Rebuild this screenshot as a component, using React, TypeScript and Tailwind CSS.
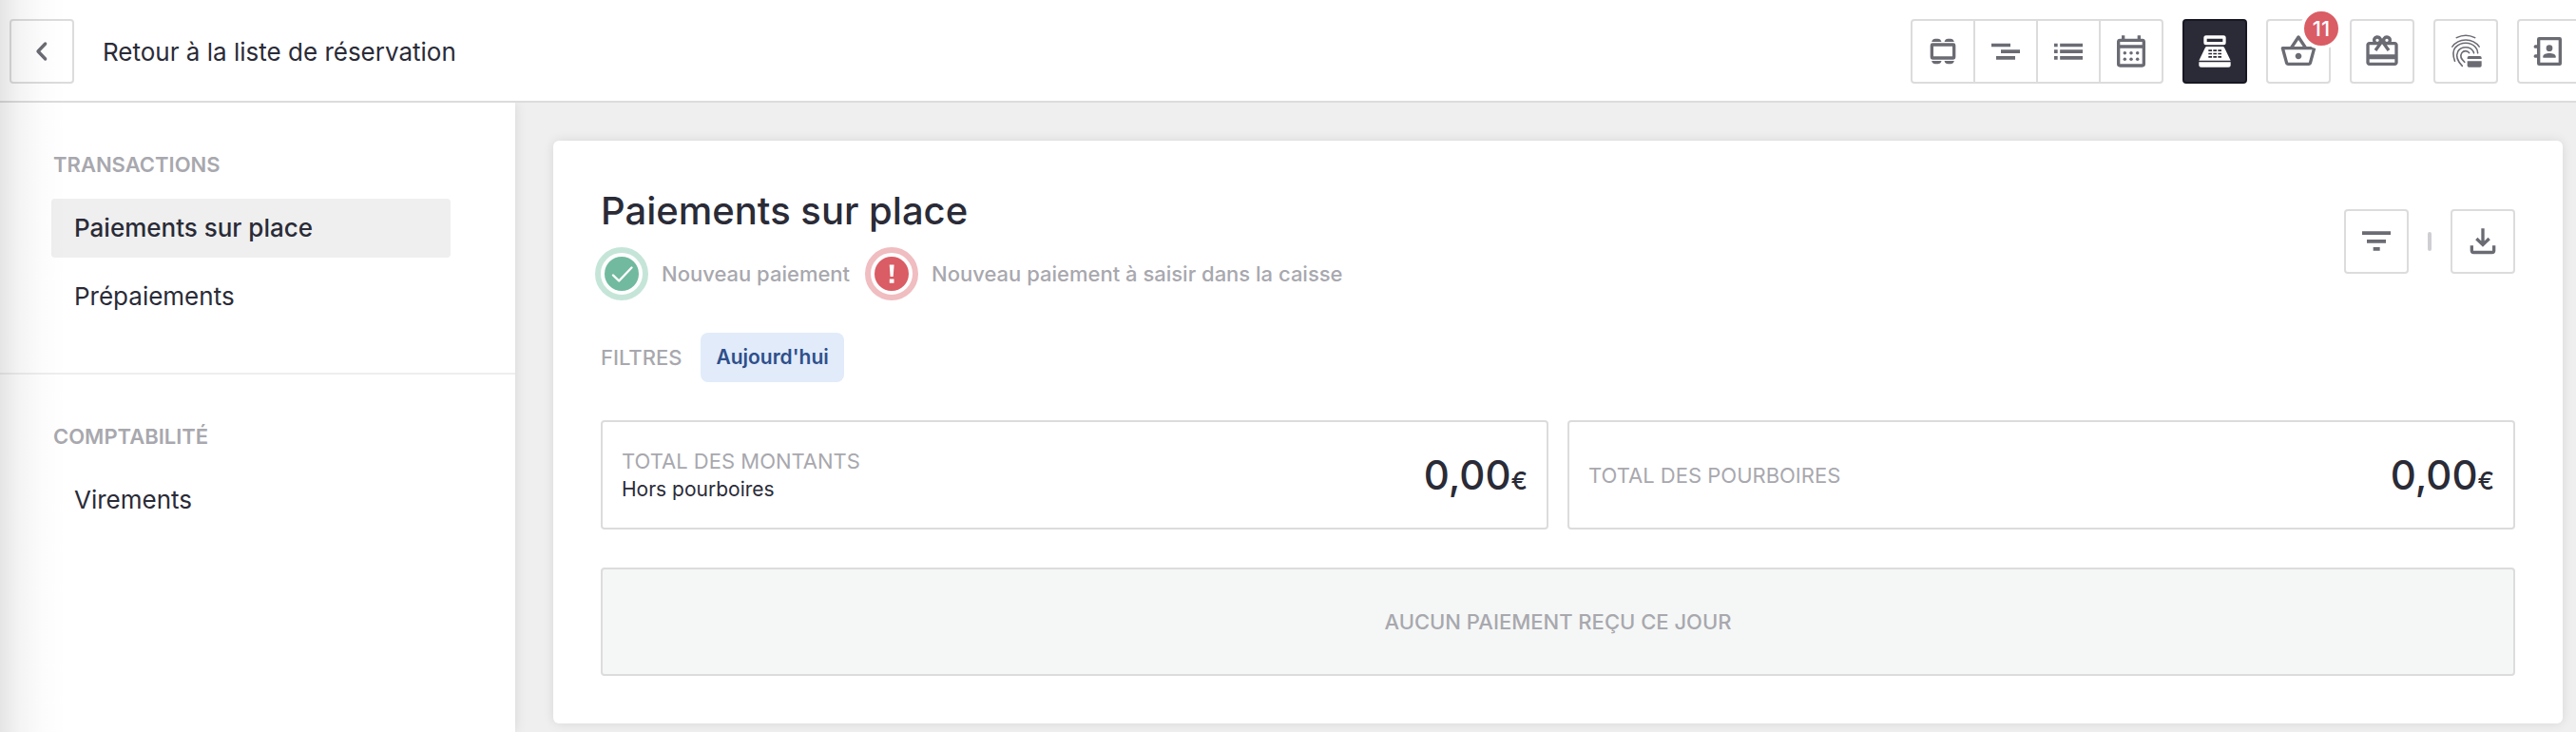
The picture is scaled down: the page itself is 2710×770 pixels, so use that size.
import type { ReactNode } from "react";
import { MdCardGiftcard, MdOutlineShoppingBasket } from "react-icons/md";

function Glyph({ children }: { children: ReactNode }) {
  return (
    <svg viewBox="0 0 24 24" className="size-10" fill="currentColor" aria-hidden="true">
      {children}
    </svg>
  );
}

const TableGlyph = () => (
  <Glyph>
    <rect x="5" y="7.8" width="14" height="8.4" rx="0.4" fill="none" stroke="currentColor" strokeWidth="2" />
    <path d="M4.900 6c.3-1.300 1.200-2 2.300-2h1.600c1.100 0 2 .7 2.300 2zM12.900 6c.3-1.300 1.200-2 2.300-2h1.600c1.100 0 2 .7 2.300 2zM4.900 18c.3 1.300 1.200 2 2.300 2h1.600c1.100 0 2-.7 2.300-2zM12.900 18c.3 1.300 1.200 2 2.300 2h1.600c1.100 0 2-.7 2.300-2z" />
  </Glyph>
);

const TimelineGlyph = () => (
  <Glyph>
    <path d="M3 7h12v2.200H3zM9 11h12v2.200H9zM6 15h12v2.200H6z" />
  </Glyph>
);

const ListGlyph = () => (
  <Glyph>
    <path d="M3 7h2.200v2.200H3zM3 11h2.200v2.200H3zM3 15h2.200v2.200H3zM6.700 7H21v2.200H6.700zM6.700 11H21v2.200H6.700zM6.700 15H21v2.200H6.700z" />
  </Glyph>
);

const CalendarGlyph = () => (
  <Glyph>
    <path
      fillRule="evenodd"
      d="M6 2h2v2h8V2h2v2h1a2 2 0 0 1 2 2v14a2 2 0 0 1-2 2H5a2 2 0 0 1-2-2V6a2 2 0 0 1 2-2h1zM5 6v2h14V6zM5 10v10h14V10z"
    />
    <circle cx="8" cy="13" r="1.050" />
    <circle cx="12" cy="13" r="1.050" />
    <circle cx="16" cy="13" r="1.050" />
    <circle cx="8" cy="17" r="1.050" />
    <circle cx="12" cy="17" r="1.050" />
    <circle cx="16" cy="17" r="1.050" />
  </Glyph>
);

const RegisterGlyph = () => (
  <Glyph>
    <path
      fillRule="evenodd"
      d="M6.500 2h11A1.500 1.500 0 0 1 19 3.500v3A1.500 1.500 0 0 1 17.500 8h-11A1.500 1.500 0 0 1 5 6.500v-3A1.500 1.500 0 0 1 6.500 2zM7 4v2h10V4z"
    />
    <path
      fillRule="evenodd"
      d="M7.200 9h9.600c.6 0 1.100.3 1.300.8L22 17.800H2l3.900-8c.2-.5.700-.8 1.300-.8zM8 11v1h2.200v-1zM11 11v1h2.200v-1zM14 11v1h2.200v-1zM8 13v1h2.200v-1zM11 13v1h2.200v-1zM14 13v1h2.200v-1zM8 15v1h2.200v-1zM11 15v1h2.200v-1zM14 15v1h2.200v-1z"
    />
    <path d="M2 18.800h20v1.700a1.500 1.500 0 0 1-1.500 1.500h-17A1.500 1.500 0 0 1 2 20.500z" />
  </Glyph>
);

const FingerprintCardGlyph = () => (
  <Glyph>
    <g fill="none" stroke="currentColor" strokeWidth="0.950" strokeLinecap="round">
      <path d="M6.200 3.400C9.700 1.600 14.300 1.600 17.800 3.400" />
      <path d="M3.500 9.100C7.500 3.300 16.500 3.300 20.500 9.100" />
      <path d="M5.100 18.100C3.800 14.500 3.700 11.700 5.500 9.500C9 5.800 15 5.800 18.200 9.400C19.200 10.500 19.600 11.900 19.600 13.100" />
      <path d="M9.800 21.200C6.500 17.800 5.900 14.300 7.100 12C9.100 8.600 14.900 8.600 16.700 12C17 12.500 17.100 12.800 17.100 13.100" />
      <path d="M11.300 18.800C9 16.900 8.400 14.700 9.500 13C10.700 11.300 13.200 11.400 14.200 13" />
    </g>
    <path d="M14 15h7a1 1 0 0 1 1 1v.8h-9V16a1 1 0 0 1 1-1zM13 18.200h9V21a1 1 0 0 1-1 1h-7a1 1 0 0 1-1-1z" />
  </Glyph>
);

const ContactsGlyph = () => (
  <Glyph>
    <rect x="5.200" y="4" width="13.600" height="16" rx="0.300" fill="none" stroke="currentColor" strokeWidth="2" />
    <rect x="2.200" y="8" width="3.400" height="2" rx="0.900" />
    <rect x="2.200" y="14" width="3.400" height="2" rx="0.900" />
    <circle cx="12" cy="10" r="2" />
    <path d="M8 16v-.8c0-1.300 2-2 4-2s4 .7 4 2v.8z" />
  </Glyph>
);

const ChevronGlyph = () => (
  <Glyph>
    <path d="M14.200 7.200 9.600 12l4.600 4.800" fill="none" stroke="currentColor" strokeWidth="2" strokeLinecap="round" strokeLinejoin="round" />
  </Glyph>
);

const FilterGlyph = () => (
  <Glyph>
    <path d="M3 5.600h18v2.200H3zM6 10.800h12V13H6zM10 15.600h4.200v2.200H10z" />
  </Glyph>
);

const DownloadGlyph = () => (
  <Glyph>
    <path d="M12 3.800v10M8 10.200l4 3.900 4-3.900M5 14.600v3.100c0 .7.500 1.200 1.200 1.200h11.600c.7 0 1.200-.5 1.200-1.200v-3.100" fill="none" stroke="currentColor" strokeWidth="2" />
  </Glyph>
);

const squareButton =
  "relative flex size-[68px] shrink-0 items-center justify-center rounded border-2 border-[#dcdcdc] text-[#6a6b73]";

function SquareButton({ label, children }: { label: string; children: ReactNode }) {
  return (
    <button type="button" aria-label={label} className={squareButton}>
      {children}
    </button>
  );
}

const views = [
  { label: "Plan de salle", icon: <TableGlyph /> },
  { label: "Chronologie", icon: <TimelineGlyph /> },
  { label: "Liste", icon: <ListGlyph /> },
  { label: "Calendrier", icon: <CalendarGlyph /> },
];

function TopBar() {
  return (
    <header className="flex items-center justify-between overflow-hidden border-b-2 border-[#dcdcdc] bg-white pt-[10px] pb-[18px] pl-[10px]">
      <a href="#reservations" className="mt-[10px] flex items-center gap-[30px] text-[26px]">
        <span className="flex size-[68px] items-center justify-center rounded border-2 border-[#dcdcdc] text-[#6a6b73]">
          <ChevronGlyph />
        </span>
        Retour à la liste de réservation
      </a>
      <nav aria-label="Vues" className="mt-[10px] -mr-[6px] flex shrink-0 gap-5">
        <div className="flex h-[68px] divide-x-2 divide-[#dcdcdc] rounded border-2 border-[#dcdcdc] text-[#6a6b73]">
          {views.map((view) => (
            <button key={view.label} type="button" aria-label={view.label} className="flex w-[66px] items-center justify-center last:w-16">
              {view.icon}
            </button>
          ))}
        </div>
        <button
          type="button"
          aria-label="Caisse"
          className="flex size-[68px] items-center justify-center rounded border-2 border-[#171822] bg-[#2a2b37] text-white"
        >
          <RegisterGlyph />
        </button>
        <SquareButton label="Commandes">
          <MdOutlineShoppingBasket className="size-10" />
          <span className="absolute -top-[14px] -right-[14px] flex size-11 items-center justify-center rounded-full border-4 border-white bg-[#da5c64] text-[22px] leading-none font-medium text-white">
            11
          </span>
        </SquareButton>
        <SquareButton label="Bons cadeaux">
          <MdCardGiftcard className="size-10" />
        </SquareButton>
        <SquareButton label="Empreintes bancaires">
          <FingerprintCardGlyph />
        </SquareButton>
        <SquareButton label="Contacts">
          <ContactsGlyph />
        </SquareButton>
      </nav>
    </header>
  );
}

function NavSection({ title, items }: { title: string; items: { label: string; active?: boolean }[] }) {
  return (
    <section className="border-[#eeeeee] py-[49px] pr-[68px] pl-[54px] not-last:border-b-2">
      <h2 className="mb-5 pl-0.5 text-[22px] leading-8 font-semibold text-[#a8a8ae] uppercase">{title}</h2>
      <ul className="flex flex-col gap-[10px] text-[26px]">
        {items.map((item) => (
          <li key={item.label}>
            <a
              href="#"
              aria-current={item.active ? "page" : undefined}
              className={item.active ? "flex h-[62px] items-center rounded bg-[#efefef] px-6 pb-0.5 font-medium" : "flex h-[62px] items-center rounded px-6 pb-0.5"}
            >
              {item.label}
            </a>
          </li>
        ))}
      </ul>
    </section>
  );
}

function Status({ tone, label }: { tone: "ok" | "alert"; label: string }) {
  return (
    <div className="flex items-center gap-[14px]">
      <svg viewBox="0 0 56 56" className="size-14" aria-hidden="true">
        <circle cx="28" cy="28" r="25" fill="none" strokeWidth="6" className={tone === "ok" ? "stroke-[#c6e5d9]" : "stroke-[#f0bdc1]"} />
        <circle cx="28" cy="28" r="18" className={tone === "ok" ? "fill-[#71ba9f]" : "fill-[#da5c64]"} />
        {tone === "ok" ? (
          <path d="M19 29.500l6.200 6L38.500 21.500" fill="none" stroke="#ffffff" strokeWidth="2.400" strokeLinecap="round" strokeLinejoin="round" />
        ) : (
          <path d="M25.700 18.500h4.900l-.9 12.500h-3.100zM25.800 33.500h4.700v4.200h-4.700z" fill="#ffffff" />
        )}
      </svg>
      {label}
    </div>
  );
}

function Total({ title, note }: { title: string; note?: string }) {
  return (
    <div className="flex h-[115px] items-center justify-between rounded border-2 border-[#dcdcdc] px-5">
      <div className="text-[22px] leading-[30px]">
        <h2 className="text-[#a8a8ae] uppercase">{title}</h2>
        {note && <p className="text-[21px]">{note}</p>}
      </div>
      <p className="text-[42px] font-medium">
        0,00<span className="text-[26px]">€</span>
      </p>
    </div>
  );
}

export default function App() {
  return (
    <div className="relative flex min-h-screen flex-col bg-[#efefef] font-['Inter',sans-serif] text-[#2a2b37]">
      <TopBar />
      <div className="flex grow">
        <aside className="w-[542px] shrink-0 bg-white shadow-[0_0_12px_rgba(0,0,0,0.1)] [clip-path:inset(0_-20px_0_0)]">
          <NavSection title="Transactions" items={[{ label: "Paiements sur place", active: true }, { label: "Prépaiements" }]} />
          <NavSection title="Comptabilité" items={[{ label: "Virements" }]} />
        </aside>
        <main className="min-w-0 grow self-start pt-10 pr-[14px] pl-10">
          <div className="rounded-md bg-white p-[50px] shadow-[0_0_12px_rgba(0,0,0,0.1)]">
            <div className="flex items-start justify-between">
              <div>
                <h1 className="text-[40px] leading-[48px] font-medium">Paiements sur place</h1>
                <div className="mt-[14px] -ml-1.5 flex gap-4 text-[22px] font-medium text-[#a8a8ae]">
                  <Status tone="ok" label="Nouveau paiement" />
                  <Status tone="alert" label="Nouveau paiement à saisir dans la caisse" />
                </div>
              </div>
              <div className="mt-[22px] flex items-center gap-5">
                <SquareButton label="Filtrer">
                  <FilterGlyph />
                </SquareButton>
                <span className="h-5 w-1 rounded-sm bg-[#cfcfd3]" />
                <SquareButton label="Télécharger">
                  <DownloadGlyph />
                </SquareButton>
              </div>
            </div>
            <div className="mt-[34px] flex items-center gap-5 text-[22px]">
              <span className="font-medium text-[#a8a8ae]">FILTRES</span>
              <button type="button" className="h-[52px] rounded-lg bg-[#e1ebfa] px-4 text-[21px] font-semibold text-[#2f4f8a]">
                Aujourd'hui
              </button>
            </div>
            <div className="mt-10 grid grid-cols-2 gap-5">
              <Total title="Total des montants" note="Hors pourboires" />
              <Total title="Total des pourboires" />
            </div>
            <div className="mt-10 flex h-[114px] items-center justify-center rounded border-2 border-[#dcdcdc] bg-[#f5f7f6] text-[22px] font-medium text-[#a8a8ae]">
              AUCUN PAIEMENT REÇU CE JOUR
            </div>
          </div>
        </main>
      </div>
      <div className="pointer-events-none absolute inset-y-0 left-0 w-[70px] bg-[linear-gradient(to_right,rgba(0,0,0,0.1),rgba(0,0,0,0.045)_30%,rgba(0,0,0,0.012)_65%,transparent)]" />
    </div>
  );
}
